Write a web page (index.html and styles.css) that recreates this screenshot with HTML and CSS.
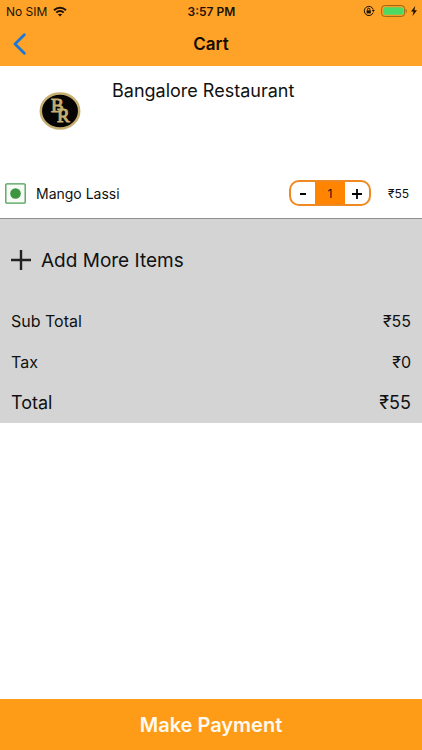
FILE: index.html
```html
<!DOCTYPE html>
<html lang="en">
<head>
<meta charset="utf-8">
<meta name="viewport" content="width=device-width, initial-scale=1">
<title>Cart</title>
<link rel="stylesheet" href="styles.css">
</head>
<body>
<header class="top">
  <div class="status">
    <div class="status-left">
      <span>No SIM</span>
      <svg width="14" height="11" viewBox="0 0 14 11" fill="none" stroke="#1c1205" stroke-width="2" aria-hidden="true">
        <path d="M1 4.2C4.4.9 9.6.9 13 4.2M3.3 6.6c2.1-2 5.3-2 7.4 0"/>
        <path d="M7 10.6 4.9 8.5c1.2-1 3-1 4.2 0z" fill="#1c1205" stroke="none"/>
      </svg>
    </div>
    <div class="clock">3:57 PM</div>
    <div class="status-right">
      <svg width="12" height="12" viewBox="0 0 12 12" fill="none" stroke="#1c1205" aria-hidden="true">
        <path d="M10.2 7.6A4.6 4.6 0 1 1 10.3 4.6"/>
        <path d="M8.7 5.1h3.2l-1.6 2z" fill="#1c1205" stroke="none"/>
        <path d="M3.6 5.4h4.2v3H3.6z" fill="#1c1205" stroke="none"/>
        <path d="M4.5 5.6V4.4a1.2 1.2 0 0 1 2.4 0v1.2"/>
      </svg>
      <svg class="battery" width="26" height="12" viewBox="0 0 26 12" fill="none" aria-hidden="true">
        <rect x=".6" y=".6" width="23" height="10.8" rx="3" stroke="#98640f"/>
        <rect x="2.2" y="2.2" width="19.8" height="7.6" rx="1.5" fill="#4cd964"/>
        <path d="M24.800 4v4c1.300-.7 1.300-3.300 0-4z" fill="#98640f"/>
      </svg>
      <svg width="6" height="10" viewBox="0 0 6 10" fill="#1c1205" aria-hidden="true"><path d="M4.300 0 0 5.600h2.500L1.500 10 6 4.200H3.400z"/></svg>
    </div>
  </div>
  <nav class="nav">
    <a class="back" href="#" aria-label="Back">
      <svg width="13" height="22" viewBox="0 0 13 22" fill="none" stroke="#1a78d8" stroke-width="2.800" stroke-linecap="round" stroke-linejoin="round" aria-hidden="true"><path d="M11.300 1.800 2 11l9.300 9.200"/></svg>
    </a>
    <h1 class="title">Cart</h1>
  </nav>
</header>

<main class="content">
  <section class="restaurant">
    <svg class="logo" width="42" height="38" viewBox="0 0 42 38" role="img" aria-label="Bangalore Restaurant logo">
      <ellipse cx="21" cy="19" rx="19.200" ry="17.600" fill="#060504" stroke="#c5ae70" stroke-width="2.500"/>
      <g class="monogram"><text x="12" y="20">B</text><text x="18" y="30">R</text></g>
    </svg>
    <h2 class="name">Bangalore Restaurant</h2>
  </section>

  <section class="item">
    <svg width="21" height="21" viewBox="0 0 21 21" role="img" aria-label="Vegetarian">
      <rect x=".8" y=".8" width="19.400" height="19.400" rx="1" fill="#f6fbf6" stroke="#4e9c54" stroke-width="1.300"/>
      <circle cx="10.500" cy="10.500" r="5.300" fill="#3b963f"/>
    </svg>
    <span class="item-name">Mango Lassi</span>
    <div class="stepper">
      <button type="button" aria-label="Decrease quantity"><svg width="8" height="12" viewBox="0 0 8 12" aria-hidden="true"><path d="M1 7h6" stroke="#000" stroke-width="2"/></svg></button>
      <output class="quantity">1</output>
      <button type="button" aria-label="Increase quantity"><svg width="10" height="12" viewBox="0 0 10 12" aria-hidden="true"><path d="M0 7h10M5 2v10" stroke="#000" stroke-width="1.800"/></svg></button>
    </div>
    <span class="item-price">₹55</span>
  </section>

  <section class="summary">
    <button class="add" type="button">
      <svg width="20" height="20" viewBox="0 0 20 20" aria-hidden="true"><path d="M0 10h20M10 0v20" stroke="#222" stroke-width="2.400"/></svg>
      <span>Add More Items</span>
    </button>
    <dl class="totals">
      <div class="line"><dt>Sub Total</dt><dd>₹55</dd></div>
      <div class="line"><dt>Tax</dt><dd>₹0</dd></div>
      <div class="line total"><dt>Total</dt><dd>₹55</dd></div>
    </dl>
  </section>
</main>

<button class="pay" type="button">Make Payment</button>
</body>
</html>
```

FILE: styles.css
```css
* { box-sizing: border-box; }

body {
  margin: 0;
  min-height: 100vh;
  display: flex;
  flex-direction: column;
  background: #fff;
  color: #111;
  font-family: Inter, "Liberation Sans", sans-serif;
}

h1, h2, dl, dd { margin: 0; }

button {
  margin: 0;
  padding: 0;
  border: 0;
  background: none;
  color: inherit;
  font: inherit;
}

svg { display: block; flex: none; }

.top { background: #ffa228; }

.status {
  display: grid;
  grid-template-columns: 1fr auto 1fr;
  align-items: center;
  height: 22px;
  padding: 0 5px 0 6px;
  font-size: 12px;
  color: #1c1205;
}

.status-left, .status-right {
  display: flex;
  align-items: center;
  gap: 6px;
}

.status-right { justify-content: flex-end; gap: 4px; }

.battery { margin-left: 2px; }

.clock { font-weight: 600; }

.nav {
  display: grid;
  grid-template-columns: 1fr auto 1fr;
  align-items: center;
  height: 44px;
  padding: 0 13px;
}

.back { justify-self: start; }

.title {
  font-size: 17px;
  font-weight: 600;
  color: #120b02;
}

.content { flex: 1; }

.restaurant {
  display: flex;
  align-items: flex-start;
  gap: 31px;
  height: 102px;
  padding: 13px 39px;
}

.logo { margin-top: 13px; }

.monogram {
  font-family: "Liberation Serif", serif;
  font-size: 19px;
  fill: #c5ae70;
  stroke: #c5ae70;
  stroke-width: 1px;
}

.name {
  font-size: 18px;
  line-height: 24px;
  font-weight: 400;
}

.item {
  display: flex;
  align-items: center;
  height: 51px;
  padding: 0 13px 0 5px;
  border-bottom: 1px solid #8e8e8e;
}

.item-name {
  flex: 1;
  padding-left: 10px;
  font-size: 14px;
}

.stepper {
  display: grid;
  grid-template-columns: 24px 30px 24px;
  height: 26px;
  border: 2px solid #ef8a22;
  border-radius: 10px;
  overflow: hidden;
}

.stepper button {
  display: flex;
  align-items: center;
  justify-content: center;
}

.quantity {
  display: flex;
  align-items: center;
  justify-content: center;
  background: #ff8400;
  font-size: 12px;
}

.item-price {
  width: 38px;
  text-align: right;
  font-size: 12px;
}

.summary {
  padding: 21px 11px 0;
  background: #d4d4d4;
}

.add {
  display: flex;
  align-items: center;
  gap: 10px;
  height: 40px;
  font-size: 19px;
}

.totals { padding-top: 20px; }

.line {
  display: flex;
  align-items: center;
  justify-content: space-between;
  height: 41px;
  font-size: 16px;
}

.total { font-size: 18px; }

.pay {
  height: 51px;
  background: #ff9c17;
  color: #fffaf0;
  font-size: 20px;
  font-weight: 600;
}
```
